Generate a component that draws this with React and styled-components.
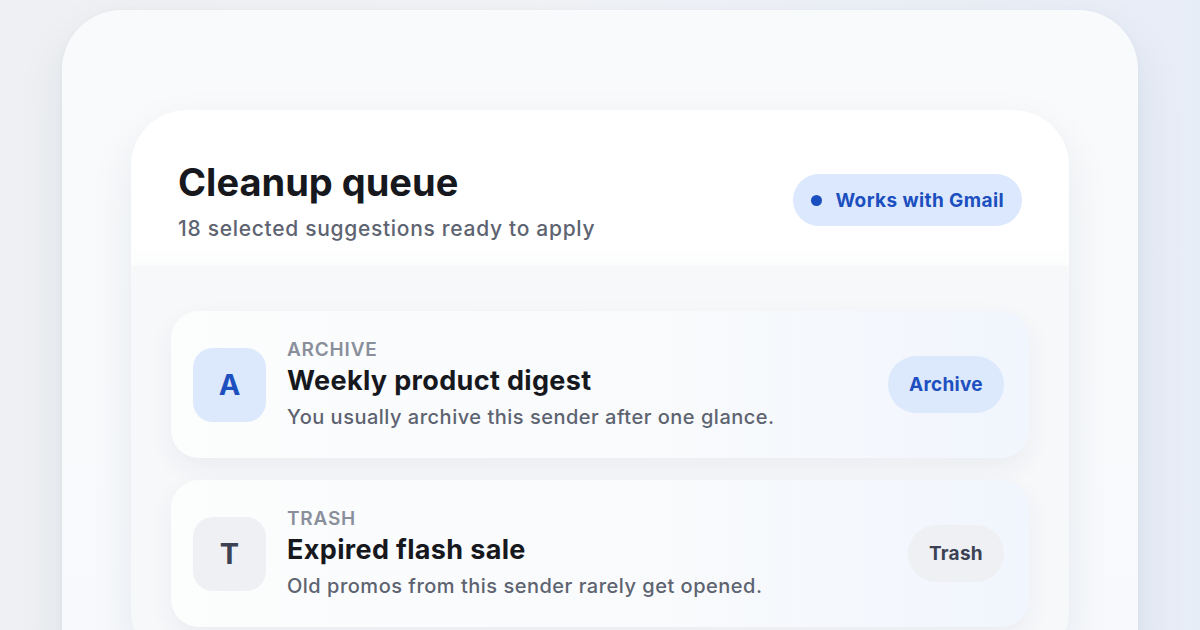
import styled, { createGlobalStyle } from 'styled-components';

const GlobalStyle = createGlobalStyle`
  html, body {
    margin: 0;
    padding: 0;
    height: 630px;
    overflow: hidden;
  }
  body {
    font-family: Inter, "Noto Sans", sans-serif;
    background: linear-gradient(90deg, #eef0f3 0%, #f1f3f6 45%, #e7edf7 100%);
  }
`;

const Page = styled.div`
  height: 630px;
  display: flex;
  justify-content: center;
  padding-top: 10px;
  box-sizing: border-box;
  overflow: hidden;
`;

const Shell = styled.div`
  width: 1076px;
  height: 700px;
  box-sizing: border-box;
  padding: 100px 69px 0;
  border-radius: 60px;
  background: linear-gradient(180deg, #f9fafb 0%, #f7f9fc 100%);
  box-shadow: 0 20px 50px rgba(30, 45, 80, 0.08), 0 2px 8px rgba(30, 45, 80, 0.03);
`;

const Card = styled.div`
  border-radius: 56px;
  background: #f7f8fa;
  box-shadow: 0 18px 44px rgba(30, 45, 80, 0.08);
  overflow: hidden;
`;

const Header = styled.div`
  display: flex;
  justify-content: space-between;
  align-items: flex-start;
  padding: 49px 47px 22px;
  background: linear-gradient(180deg, #ffffff 0%, #ffffff 85%, #fbfcfc 100%);
`;

const Title = styled.h1`
  margin: 0;
  font-size: 38px;
  line-height: 46px;
  font-weight: 700;
  letter-spacing: 0px;
  color: #16181d;
`;

const Subtitle = styled.p`
  margin: 9px 0 0;
  font-size: 21px;
  line-height: 30px;
  font-weight: 500;
  color: #5d6370;
  letter-spacing: 0.7px;
`;

const Badge = styled.div`
  display: flex;
  align-items: center;
  gap: 13px;
  margin-top: 15px;
  height: 52px;
  padding: 0 18px;
  border-radius: 26px;
  background: #dbe8fd;
  color: #1b4fc0;
  font-size: 19px;
  font-weight: 700;
  letter-spacing: 0.4px;
`;

const Dot = styled.span`
  width: 11px;
  height: 11px;
  border-radius: 50%;
  background: #1b4fc0;
`;

const List = styled.div`
  display: flex;
  flex-direction: column;
  gap: 22px;
  padding: 45px 40px 40px;
`;

const Row = styled.div`
  display: flex;
  align-items: center;
  gap: 21px;
  height: 147px;
  box-sizing: border-box;
  padding: 0 25px 0 22px;
  border-radius: 28px;
  background: linear-gradient(90deg, #fcfdfd 0%, #f8fafc 60%, #f1f5fd 100%);
  box-shadow: 0 10px 26px rgba(30, 45, 80, 0.06);
`;

const tones = {
  blue: { bg: '#dce8fb', fg: '#1d4fbf' },
  gray: { bg: '#eef0f3', fg: '#3a4253' },
};

const Avatar = styled.div`
  width: 73px;
  height: 74px;
  flex-shrink: 0;
  border-radius: 20px;
  display: flex;
  align-items: center;
  justify-content: center;
  background: ${(p) => tones[p.$tone].bg};
  color: ${(p) => tones[p.$tone].fg};
  font-size: 29px;
  font-weight: 700;
`;

const Info = styled.div`
  flex: 1;
  display: flex;
  flex-direction: column;
`;

const Kind = styled.span`
  font-size: 19px;
  line-height: 22px;
  font-weight: 600;
  color: #8a8f9c;
  letter-spacing: 0.8px;
`;

const ItemTitle = styled.span`
  margin-top: 3px;
  font-size: 27px;
  line-height: 34px;
  font-weight: 700;
  color: #16181d;
  letter-spacing: 0.35px;
`;

const Desc = styled.span`
  margin-top: 5px;
  font-size: 20px;
  line-height: 28px;
  font-weight: 500;
  color: #5d6370;
  letter-spacing: 0.5px;
`;

const Action = styled.button`
  height: 57px;
  padding: 0 21px;
  border: none;
  border-radius: 29px;
  font-family: inherit;
  font-size: 19px;
  font-weight: 700;
  letter-spacing: 0.3px;
  background: ${(p) => tones[p.$tone].bg};
  color: ${(p) => tones[p.$tone].fg};
  cursor: pointer;
`;

const items = [
  {
    letter: 'A',
    kind: 'ARCHIVE',
    title: 'Weekly product digest',
    desc: 'You usually archive this sender after one glance.',
    action: 'Archive',
    tone: 'blue',
  },
  {
    letter: 'T',
    kind: 'TRASH',
    title: 'Expired flash sale',
    desc: 'Old promos from this sender rarely get opened.',
    action: 'Trash',
    tone: 'gray',
  },
];

export default function App() {
  return (
    <>
      <GlobalStyle />
      <Page>
        <Shell>
          <Card>
            <Header>
              <div>
                <Title>Cleanup queue</Title>
                <Subtitle>18 selected suggestions ready to apply</Subtitle>
              </div>
              <Badge>
                <Dot />
                Works with Gmail
              </Badge>
            </Header>
            <List>
              {items.map((item) => (
                <Row key={item.kind}>
                  <Avatar $tone={item.tone}>{item.letter}</Avatar>
                  <Info>
                    <Kind>{item.kind}</Kind>
                    <ItemTitle>{item.title}</ItemTitle>
                    <Desc>{item.desc}</Desc>
                  </Info>
                  <Action $tone={item.tone}>{item.action}</Action>
                </Row>
              ))}
            </List>
          </Card>
        </Shell>
      </Page>
    </>
  );
}
